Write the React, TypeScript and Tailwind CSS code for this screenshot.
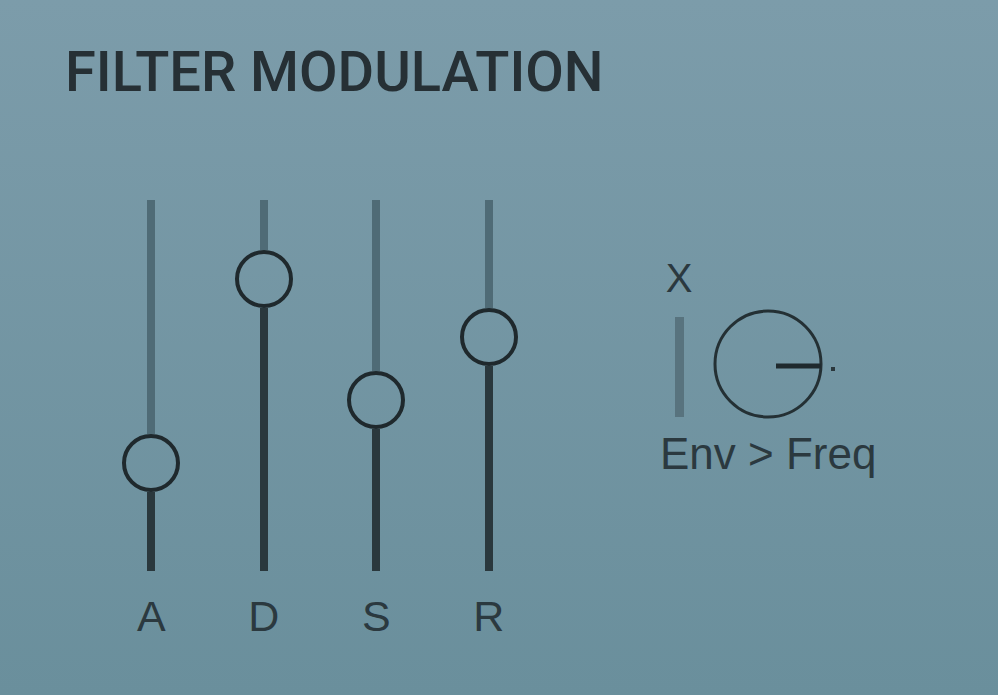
import React from "react";

type Stage = { label: string; offset: number };

// offset = distance from the top of the track to the top of the handle
const stages: Stage[] = [
  { label: "A", offset: 234 },
  { label: "D", offset: 50 },
  { label: "S", offset: 171 },
  { label: "R", offset: 108 },
];

function EnvSlider({ label, offset }: Stage) {
  return (
    <div className="flex w-[112.5px] flex-col items-center">
      <div className="flex h-[371px] flex-col items-center">
        <div className="w-2 bg-[#4f6b76]" style={{ height: offset }} />
        <div className="h-[58px] w-[58px] shrink-0 rounded-full border-[4px] border-[#1f292d]" />
        <div className="w-2 flex-1 bg-[#2a383d]" />
      </div>
      <span className="mt-[24px] text-[43px] leading-[43px] text-[#2b393f]">
        {label}
      </span>
    </div>
  );
}

function AmountKnob() {
  return (
    <svg width="124" height="112" viewBox="0 0 124 112" className="block">
      <circle cx="55" cy="55" r="53" fill="none" stroke="#243034" strokeWidth="3" />
      <line x1="63" y1="57" x2="108" y2="57" stroke="#1f2a2e" strokeWidth="5" />
      <rect x="118" y="58" width="4" height="4" fill="#2a373c" />
    </svg>
  );
}

export default function App() {
  return (
    <div
      className="h-[695px] w-[998px] overflow-hidden bg-gradient-to-b from-[#7c9caa] to-[#6a8f9c] text-[#263237]"
      style={{ fontFamily: "'Liberation Sans', Arial, sans-serif" }}
    >
      <h1
        className="pl-[65px] pt-[40px] text-[56px] font-medium leading-[64px] text-[#263035]"
        style={{ fontFamily: "Roboto, 'Liberation Sans', sans-serif" }}
      >
        FILTER MODULATION
      </h1>

      <div className="mt-[96px] flex items-start pl-[95px]">
        {stages.map((s) => (
          <EnvSlider key={s.label} {...s} />
        ))}

        <div className="ml-[116px] mt-[58px] flex flex-col">
          <div className="flex items-end">
            <div className="flex w-[36px] flex-col items-center">
              <span className="text-[40px] leading-[40px] text-[#2b393f]">X</span>
              <div className="mb-[4px] mt-[19px] h-[100px] w-[9px] bg-[#58737e]" />
            </div>
            <div className="ml-[16px]">
              <AmountKnob />
            </div>
          </div>
          <span className="ml-[-1px] mt-[11px] text-[44px] leading-[44px] text-[#2b393f]">
            Env &gt; Freq
          </span>
        </div>
      </div>
    </div>
  );
}
